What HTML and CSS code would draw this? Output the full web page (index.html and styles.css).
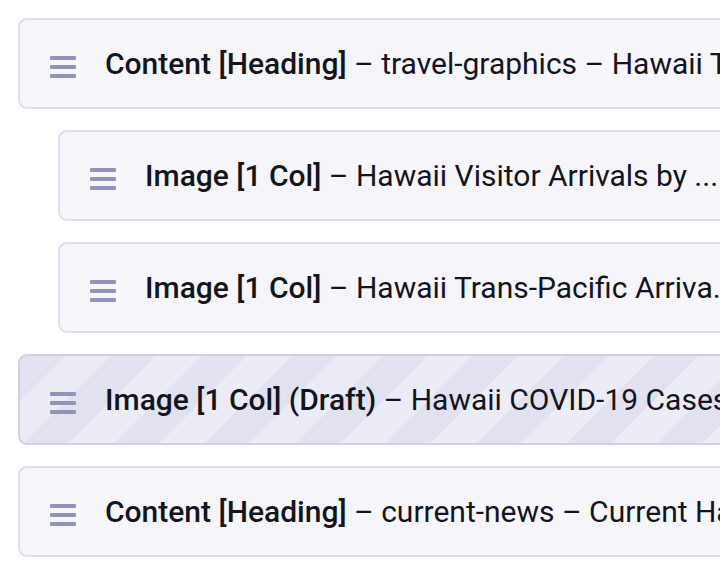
FILE: index.html
```html
<!DOCTYPE html>
<html lang="en">
<head>
<meta charset="utf-8">
<title>Blocks</title>
<link rel="stylesheet" href="styles.css">
</head>
<body>
<ul class="blocks">
  <li class="block">
    <svg class="handle" width="26" height="30" viewBox="0 0 26 30" aria-hidden="true"><rect x="0" y="7" width="26" height="4" rx="1"/><rect x="0" y="16" width="26" height="4" rx="1"/><rect x="0" y="25" width="26" height="4" rx="1"/></svg>
    <span class="label"><b>Content [Heading]</b> – travel-graphics – Hawaii Travel Graphics</span>
  </li>
  <li class="block nested">
    <svg class="handle" width="26" height="30" viewBox="0 0 26 30" aria-hidden="true"><rect x="0" y="7" width="26" height="4" rx="1"/><rect x="0" y="16" width="26" height="4" rx="1"/><rect x="0" y="25" width="26" height="4" rx="1"/></svg>
    <span class="label"><b>Image [1 Col]</b> – Hawaii Visitor Arrivals by ...</span>
  </li>
  <li class="block nested">
    <svg class="handle" width="26" height="30" viewBox="0 0 26 30" aria-hidden="true"><rect x="0" y="7" width="26" height="4" rx="1"/><rect x="0" y="16" width="26" height="4" rx="1"/><rect x="0" y="25" width="26" height="4" rx="1"/></svg>
    <span class="label"><b>Image [1 Col]</b> – Hawaii Trans-Pacific Arriva.</span>
  </li>
  <li class="block draft">
    <svg class="handle" width="26" height="30" viewBox="0 0 26 30" aria-hidden="true"><rect x="0" y="7" width="26" height="4" rx="1"/><rect x="0" y="16" width="26" height="4" rx="1"/><rect x="0" y="25" width="26" height="4" rx="1"/></svg>
    <span class="label"><b>Image [1 Col] (Draft)</b> – Hawaii COVID-19 Cases by County</span>
  </li>
  <li class="block">
    <svg class="handle" width="26" height="30" viewBox="0 0 26 30" aria-hidden="true"><rect x="0" y="7" width="26" height="4" rx="1"/><rect x="0" y="16" width="26" height="4" rx="1"/><rect x="0" y="25" width="26" height="4" rx="1"/></svg>
    <span class="label"><b>Content [Heading]</b> – current-news – Current Hawaii News</span>
  </li>
</ul>
</body>
</html>
```
FILE: styles.css
```css
html, body {
  margin: 0;
  padding: 0;
  background: #ffffff;
  overflow: hidden;
}
body {
  font-family: Roboto, "Liberation Sans", sans-serif;
  color: #14141f;
}
.blocks {
  list-style: none;
  margin: 0;
  padding: 18px 0 0 18px;
  width: 900px;
  display: flex;
  flex-direction: column;
  gap: 21px;
}
.block {
  display: flex;
  align-items: center;
  gap: 29px;
  padding: 26px 0 26px 30px;
  border: 2px solid #dedfee;
  border-radius: 9px;
  background: #f6f6fa;
  font-size: 30px;
  line-height: 35px;
  white-space: nowrap;
  overflow: hidden;
}
.nested {
  margin-left: 40px;
}
.draft {
  border-color: #d0d0e2;
  background: repeating-linear-gradient(135deg, #e1e1ef 0 32px, #ececf6 32px 64px);
}
.handle {
  flex: none;
  fill: #9393b5;
}
.label b {
  font-weight: 500;
}
```
